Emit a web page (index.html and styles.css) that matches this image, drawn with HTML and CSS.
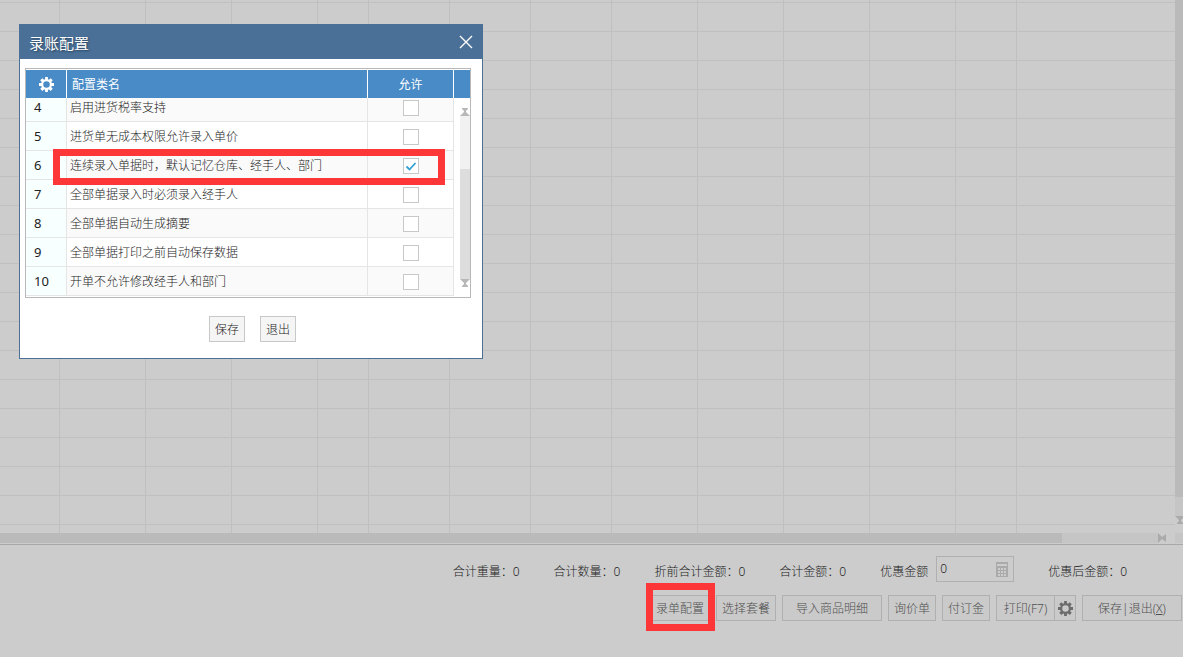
FILE: index.html
```html
<!DOCTYPE html>
<html lang="zh-CN">
<head>
  <meta charset="UTF-8">
  <title>录账配置</title>
  <link rel="stylesheet" href="styles.css">
</head>
<body>
  <svg class="defs" aria-hidden="true">
    <symbol id="gear" viewBox="0 0 16 16">
      <path fill-rule="evenodd" d="M6.500 0h3v2.300l1.200.5 1.700-1.600 2.300 2.300-1.600 1.700.5 1.300H16v3h-2.400l-.5 1.300 1.600 1.700-2.300 2.300-1.700-1.600-1.200.5V16h-3v-2.300l-1.200-.5-1.700 1.600-2.300-2.300 1.600-1.700-.5-1.300H0v-3h2.400l.5-1.300-1.600-1.700 2.300-2.300 1.700 1.600 1.200-.5zM8 4.500a3.500 3.500 0 1 0 0 7 3.500 3.500 0 0 0 0-7z"/>
    </symbol>
    <symbol id="arrow" viewBox="0 0 10 8">
      <path d="M0 8h10L6 4V3l2-2V0H2v1l2 2v1z"/>
    </symbol>
  </svg>

  <main class="page">
    <div class="sheet">
      <div class="sheet-grid">
        <i></i><i></i><i></i><i></i><i></i><i></i><i></i>
        <i></i><i></i><i></i><i></i><i></i><i></i>
      </div>
      <div class="vbar">
        <div class="vbar-thumb"></div>
        <div class="vbar-track"></div>
        <svg class="vbar-arrow"><use href="#arrow"/></svg>
      </div>
    </div>
    <div class="hbar">
      <div class="hbar-thumb"></div>
      <div class="hbar-track"></div>
      <svg class="hbar-arrow" viewBox="0 0 8 10"><path d="M0 0v10l4-4 4 3V1L4 4z"/></svg>
      <div class="hbar-corner"></div>
    </div>

    <footer class="footer">
      <div class="summary">
        <span>合计重量：0</span>
        <span>合计数量：0</span>
        <span>折前合计金额：0</span>
        <span>合计金额：0</span>
        <div class="discount">
          <label for="discount">优惠金额</label>
          <div class="discount-box">
            <input type="text" id="discount" value="0">
            <svg class="calc" viewBox="0 0 12 15">
              <path fill-rule="evenodd" d="M0 0h12v15H0zM1 2v2h10V2zM2 6v2h2V6zM5 6v2h2V6zM8 6v2h2V6zM2 9v2h2V9zM5 9v2h2V9zM8 9v2h2V9zM2 12v2h2v-2zM5 12v2h2v-2zM8 12v2h2v-2z"/>
            </svg>
          </div>
        </div>
        <span>优惠后金额：0</span>
      </div>
      <div class="toolbar">
        <div class="marked">
          <button class="btn">录单配置</button>
          <div class="mark mark-button"></div>
        </div>
        <button class="btn">选择套餐</button>
        <button class="btn btn-wide">导入商品明细</button>
        <button class="btn">询价单</button>
        <button class="btn">付订金</button>
        <div class="split">
          <button class="btn">打印(F7)</button>
          <button class="btn btn-gear" aria-label="打印设置"><svg><use href="#gear"/></svg></button>
        </div>
        <button class="btn btn-wide">保存|退出(<u>X</u>)</button>
      </div>
    </footer>
  </main>

  <section class="dialog" role="dialog" aria-labelledby="dialogTitle">
    <header class="dialog-head">
      <h1 id="dialogTitle">录账配置</h1>
      <button class="close" aria-label="关闭"><svg viewBox="0 0 14 14"><path d="M1 1l12 12M13 1L1 13"/></svg></button>
    </header>
    <div class="config">
      <table class="config-head">
        <colgroup><col class="c-num"><col><col class="c-allow"><col class="c-bar"></colgroup>
        <thead>
          <tr>
            <th><svg><use href="#gear"/></svg></th>
            <th class="left">配置类名</th>
            <th>允许</th>
            <th></th>
          </tr>
        </thead>
      </table>
      <div class="config-view">
        <table class="config-body">
          <colgroup><col class="c-num"><col><col class="c-allow"></colgroup>
          <tbody>
            <tr><th>4</th><td><label for="c4">启用进货税率支持</label></td><td><input type="checkbox" id="c4"></td></tr>
            <tr><th>5</th><td><label for="c5">进货单无成本权限允许录入单价</label></td><td><input type="checkbox" id="c5"></td></tr>
            <tr><th>6</th><td><label for="c6">连续录入单据时，默认记忆仓库、经手人、部门</label></td><td><input type="checkbox" id="c6" checked></td></tr>
            <tr><th>7</th><td><label for="c7">全部单据录入时必须录入经手人</label></td><td><input type="checkbox" id="c7"></td></tr>
            <tr><th>8</th><td><label for="c8">全部单据自动生成摘要</label></td><td><input type="checkbox" id="c8"></td></tr>
            <tr><th>9</th><td><label for="c9">全部单据打印之前自动保存数据</label></td><td><input type="checkbox" id="c9"></td></tr>
            <tr><th>10</th><td><label for="c10">开单不允许修改经手人和部门</label></td><td><input type="checkbox" id="c10"></td></tr>
          </tbody>
        </table>
        <div class="config-bar">
          <svg><use href="#arrow"/></svg>
          <div class="config-track"></div>
          <div class="config-thumb"></div>
          <svg class="down"><use href="#arrow"/></svg>
        </div>
      </div>
      <div class="mark mark-row"></div>
    </div>
    <div class="actions">
      <button>保存</button>
      <button>退出</button>
    </div>
  </section>
</body>
</html>
```

FILE: styles.css
```css
* {
  box-sizing: border-box;
}

body {
  margin: 0;
  background: #ccc;
  color: #1c1c1c;
  font-family: "Noto Sans", "Noto Sans CJK SC", sans-serif;
  font-size: 12px;
  font-weight: 300;
}

button,
input {
  font: inherit;
  color: inherit;
  margin: 0;
}

.defs {
  display: none;
}

.page {
  display: flex;
  flex-direction: column;
  height: 100vh;
}

/* background sheet */
.sheet {
  flex: 1;
  display: flex;
  min-height: 0;
}

.sheet-grid {
  flex: 1;
  display: grid;
  grid-template-columns: 60px 86px 86px 86px 51px 81px 81px 81px 86px 86px 86px 86px 61px;
  background: repeating-linear-gradient(#ccc 0 28px, #c0c0c0 28px 29px) 0 -26px / 100% 870px;
}

.sheet-grid i {
  border-right: 1px solid #c0c0c0;
}

.vbar {
  width: 8px;
  display: flex;
  flex-direction: column;
  overflow: hidden;
}

.vbar-thumb {
  flex: 1;
  background: #bababa;
}

.vbar-track {
  height: 19px;
  background: #c5c5c5;
}

.vbar-arrow {
  width: 10px;
  height: 8px;
  margin-bottom: 9px;
  fill: #aaa;
  transform: rotate(180deg);
}

.hbar {
  display: flex;
  height: 10px;
}

.hbar-thumb {
  flex: 1;
  background: #bababa;
}

.hbar-track {
  width: 96px;
  background: #c5c5c5;
}

.hbar-arrow {
  width: 8px;
  height: 10px;
  margin-right: 9px;
  fill: #aaa;
}

.hbar-corner {
  width: 8px;
  background: #c5c5c5;
}

/* footer */
.footer {
  margin-top: 1px;
  border-top: 1px solid #a8a8a8;
  padding: 11px 1px 36px;
}

.summary {
  display: flex;
  justify-content: flex-end;
  align-items: flex-end;
  gap: 34px;
  padding-right: 55px;
  margin-bottom: 13px;
  line-height: 20px;
  white-space: nowrap;
}

.discount {
  display: flex;
  align-items: flex-end;
  gap: 8px;
}

.discount-box {
  display: flex;
  align-items: center;
  width: 78px;
  height: 26px;
  padding: 0 5px 0 3px;
  border: 1px solid #b0b0b0;
}

.discount-box input {
  flex: 1;
  min-width: 0;
  padding: 0;
  border: 0;
  outline: none;
  background: none;
}

.calc {
  width: 12px;
  height: 15px;
  fill: #aaa;
}

.toolbar {
  display: flex;
  justify-content: flex-end;
  gap: 6px;
}

.btn {
  height: 26px;
  padding: 0 5px;
  border: 1px solid #b0b0b0;
  background: #cacaca;
  color: #505050;
  white-space: nowrap;
}

.btn-wide {
  width: 100px;
}

.split {
  display: flex;
  width: 80px;
}

.split .btn {
  flex: 1;
}

.split .btn-gear {
  flex: none;
  width: 21px;
  padding: 0;
  border-left: 0;
  display: flex;
  align-items: center;
  justify-content: center;
}

.btn-gear svg {
  width: 15px;
  height: 15px;
  fill: #6c6c6c;
}

/* red highlight frames */
.mark {
  position: absolute;
  border: 7px solid #fd3737;
  pointer-events: none;
}

.marked {
  position: relative;
}

.mark-button {
  inset: -12px -5px -10px -4px;
}

.mark-row {
  top: 80px;
  left: 27px;
  right: 25px;
  height: 36px;
}

/* dialog */
.dialog {
  position: absolute;
  top: 24px;
  left: 19px;
  width: 464px;
  border: 1px solid #4a7098;
  background: #fff;
}

.dialog-head {
  display: flex;
  align-items: center;
  justify-content: space-between;
  height: 34px;
  padding: 0 9px;
  background: #4a7098;
  color: #fff;
}

.dialog-head h1 {
  margin: 0;
  font-size: 15px;
  font-weight: normal;
  text-shadow: 1px 1px 2px #2a4058;
}

.close {
  display: flex;
  padding: 0;
  border: 0;
  background: none;
}

.close svg {
  width: 14px;
  height: 14px;
  fill: none;
  stroke: #fff;
  stroke-width: 1.4;
}

.config {
  position: relative;
  margin: 9px 11px 0 5px;
  border: 1px solid #b8b8b8;
  padding-top: 1px;
}

.config table {
  border-collapse: separate;
  border-spacing: 0;
  table-layout: fixed;
}

.c-num {
  width: 41px;
}

.c-allow {
  width: 86px;
}

.c-bar {
  width: 16px;
}

.config-head {
  width: 100%;
}

.config-head th {
  height: 28px;
  padding: 0;
  border-right: 1px solid #fff;
  background: #498bc7;
  color: #fff;
  font-weight: normal;
}

.config-head th:last-child {
  border-right: 0;
}

.config-head .left {
  padding-left: 5px;
  text-align: left;
}

.config-head svg {
  display: block;
  width: 15px;
  height: 15px;
  margin: 0 auto;
  fill: #fff;
}

.config-view {
  display: flex;
  height: 199px;
  overflow: hidden;
}

.config-body {
  flex: 1;
  height: 203px;
  margin-top: -5px;
}

.config-body th,
.config-body td {
  height: 29px;
  padding: 0 3px;
  border-right: 1px solid #e5e5e5;
  border-bottom: 1px solid #e5e5e5;
  text-align: left;
}

.config-body th {
  padding-left: 8px;
  background: #f7ffff;
  color: #222;
  font-size: 13px;
  font-weight: normal;
}

.config-body tr:nth-child(odd) td {
  background: #fafafa;
}

.config-body td:last-child {
  padding: 2px 0 0;
  text-align: center;
}

.config-body input {
  display: block;
  width: 16px;
  height: 16px;
  margin: 0 auto;
  appearance: none;
  border: 1px solid #c8c8c8;
  background: #fff;
}

.config-body input:checked {
  background: #fff url("data:image/svg+xml,%3Csvg xmlns='http://www.w3.org/2000/svg' viewBox='0 0 14 14'%3E%3Cpath d='M2.500 7.500l3 3 6-6.500' fill='none' stroke='%2333a0d4' stroke-width='1.800'/%3E%3C/svg%3E");
}

.config-bar {
  display: flex;
  flex-direction: column;
  width: 10px;
  margin: 10px 0 10px 6px;
}

.config-bar svg {
  width: 10px;
  height: 8px;
  fill: #b8b8b8;
}

.config-bar .down {
  transform: rotate(180deg);
}

.config-track {
  height: 53px;
  background: #f1f1f1;
}

.config-thumb {
  flex: 1;
  background: #ddd;
}

.actions {
  display: flex;
  justify-content: center;
  gap: 15px;
  padding: 18px 0 16px 3px;
}

.actions button {
  width: 36px;
  height: 26px;
  padding: 0;
  border: 1px solid #c8c8c8;
  background: #f5f5f5;
}
```
